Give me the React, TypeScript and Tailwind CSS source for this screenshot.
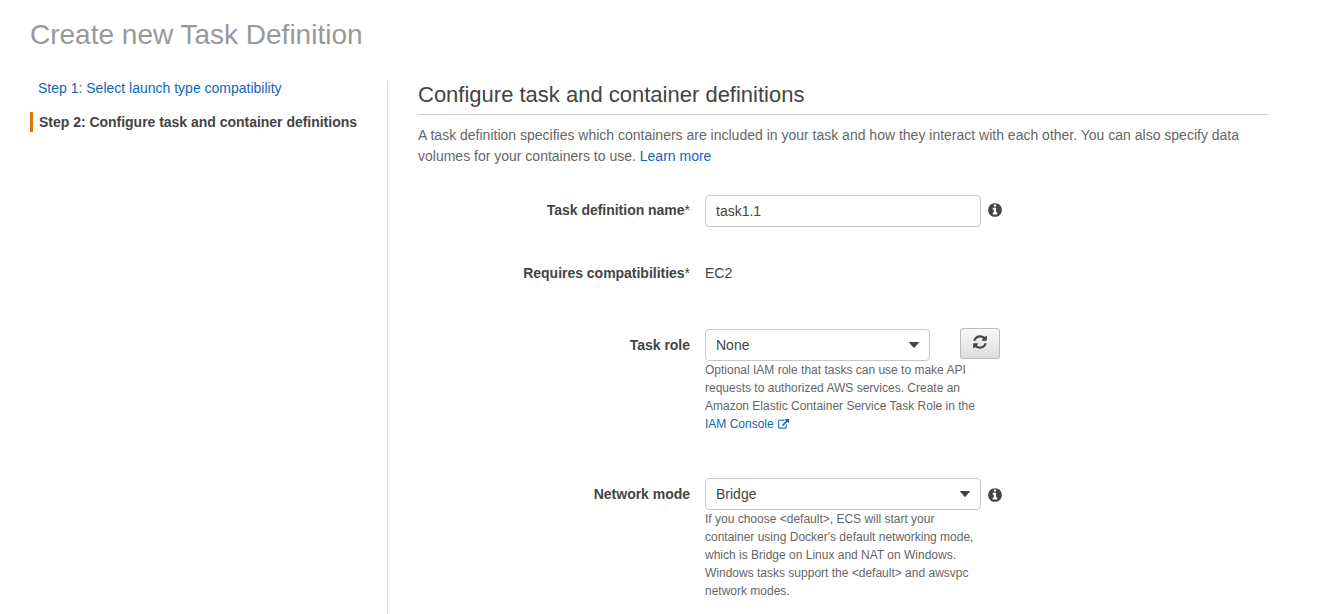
import type { ReactNode } from "react";

type IconProps = { path: string; className?: string };

function Icon({ path, className = "" }: IconProps) {
  return (
    <svg viewBox="0 0 1792 1792" fill="currentColor" className={className} aria-hidden="true">
      <path d={path} />
    </svg>
  );
}

const INFO =
  "M1152 1376v-160q0-14-9-23t-23-9h-96v-512q0-14-9-23t-23-9h-320q-14 0-23 9t-9 23v160q0 14 9 23t23 9h96v320h-96q-14 0-23 9t-9 23v160q0 14 9 23t23 9h448q14 0 23-9t9-23zm-128-896v-160q0-14-9-23t-23-9h-192q-14 0-23 9t-9 23v160q0 14 9 23t23 9h192q14 0 23-9t9-23zm640 416q0 209-103 385.5t-279.5 279.5-385.5 103-385.5-103-279.5-279.5-103-385.5 103-385.5 279.5-279.5 385.5-103 385.5 103 279.5 279.5 103 385.5z";
const REFRESH =
  "M1639 1056q0 5-1 7-64 268-268 434.5t-478 166.5q-146 0-282.5-55t-243.5-157l-129 129q-19 19-45 19t-45-19-19-45v-448q0-26 19-45t45-19h448q26 0 45 19t19 45-19 45l-137 137q71 66 161 102t187 36q134 0 250-65t186-179q11-17 53-117 8-23 30-23h192q13 0 22.5 9.5t9.5 22.5zm25-800v448q0 26-19 45t-45 19h-448q-26 0-45-19t-19-45 19-45l138-138q-148-137-349-137-134 0-250 65t-186 179q-11 17-53 117-8 23-30 23h-199q-13 0-22.5-9.5t-9.5-22.5v-7q65-268 270-434.5t480-166.5q146 0 284 55.5t245 156.5l130-129q19-19 45-19t45 19 19 45z";
const EXTERNAL =
  "M1408 928v320q0 119-84.5 203.5t-203.5 84.5h-832q-119 0-203.5-84.5t-84.5-203.5v-832q0-119 84.5-203.5t203.5-84.5h704q14 0 23 9t9 23v64q0 14-9 23t-23 9h-704q-66 0-113 47t-47 113v832q0 66 47 113t113 47h832q66 0 113-47t47-113v-320q0-14 9-23t23-9h64q14 0 23 9t9 23zm384-864v512q0 26-19 45t-45 19-45-19l-176-176-652 652q-10 10-23 10t-23-10l-114-114q-10-10-10-23t10-23l652-652-176-176q-19-19-19-45t19-45 45-19h512q26 0 45 19t19 45z";

function Row({ label, required, children, className = "" }: {
  label: string;
  required?: boolean;
  children: ReactNode;
  className?: string;
}) {
  return (
    <div className={`flex items-start gap-[15px] ${className}`}>
      <div className="w-[272px] shrink-0 pt-[5px] text-right text-sm leading-5 font-bold tracking-[-0.02px]">
        {label}
        {required && <span className="font-normal">*</span>}
      </div>
      <div>{children}</div>
    </div>
  );
}

function Select({ value, className }: { value: string; className: string }) {
  return (
    <button
      type="button"
      className={`flex h-8 items-center justify-between rounded-[4px] border border-[#c8c8c8] bg-white pr-[10px] pl-[10px] text-sm ${className}`}
    >
      <span>{value}</span>
      <svg viewBox="0 0 11 6" preserveAspectRatio="none" className="h-[6px] w-[10px]" fill="currentColor" aria-hidden="true">
        <path d="M.6 0h9.8q.9.2.2.9L6.2 5.6q-.7.6-1.4 0L.4.9Q-.3.2.6 0z" />
      </svg>
    </button>
  );
}

export default function App() {
  return (
    <div className="h-[614px] overflow-hidden bg-white px-[30px] pt-[19px] font-['Liberation_Sans',Arial,sans-serif] text-sm text-[#444]">
      <h1 className="text-[28px] leading-8 text-[#999]">Create new Task Definition</h1>
      <div className="mt-[30px] flex">
        <nav className="w-[357px] shrink-0 leading-5">
          <a className="mt-[-3px] block pl-2 text-[#1166bb]">Step 1: Select launch type compatibility</a>
          <div className="mt-[14px] border-l-[3px] border-[#dd7700] pl-[6px] font-bold tracking-[-0.02px]">
            Step 2: Configure task and container definitions
          </div>
        </nav>
        <main className="h-[533px] w-[881px] border-l border-[#ddd] pl-[30px]">
          <h2 className="h-[34px] border-b border-[#ccc] text-[22px] leading-[28px]">
            Configure task and container definitions
          </h2>
          <p className="mt-[10px] leading-[21px] text-[#666]">
            A task definition specifies which containers are included in your task and how they interact with each other. You can also specify data volumes for your containers to use.{" "}
            <a className="text-[#1166bb]">Learn more</a>
          </p>

          <Row label="Task definition name" required className="mt-[28px] h-8">
            <div className="flex items-start">
              <input
                defaultValue="task1.1"
                className="h-8 w-[276px] rounded-[4px] border border-[#c8c8c8] bg-white px-[10px] text-sm"
              />
              <Icon path={INFO} className="mt-[7px] ml-[6px] size-4" />
            </div>
          </Row>

          <Row label="Requires compatibilities" required className="mt-[31px] h-[30px]">
            <div className="pt-[5px] leading-5">EC2</div>
          </Row>

          <Row label="Task role" className="mt-[42px]">
            <div className="flex items-start gap-[30px]">
              <Select value="None" className="mt-[-1px] w-[225px]" />
              <button
                type="button"
                aria-label="Refresh"
                className="mt-[-2px] mb-[-2px] flex h-[31px] w-10 items-center justify-center rounded-[3px] border border-[#bbb] bg-linear-to-b from-[#f8f8f8] to-[#dedede] pb-[3px]"
              >
                <Icon path={REFRESH} className="size-4" />
              </button>
            </div>
            <p className="w-[276px] text-xs leading-[18px] text-[#666]">
              Optional IAM role that tasks can use to make API requests to authorized AWS services. Create an Amazon Elastic Container Service Task Role in the{" "}
              <a className="text-[#1166bb]">
                IAM Console <Icon path={EXTERNAL} className="ml-px inline size-[11px] stroke-current stroke-[50] align-[-2px]" />
              </a>
            </p>
          </Row>

          <Row label="Network mode" className="mt-[46px]">
            <div className="flex items-start">
              <Select value="Bridge" className="mt-[-1px] w-[276px]" />
              <Icon path={INFO} className="mt-[8px] ml-[6px] size-4" />
            </div>
            <p className="w-[276px] text-xs leading-[18px] text-[#666]">
              If you choose &lt;default&gt;, ECS will start your container using Docker's default networking mode, which is Bridge on Linux and NAT on Windows. Windows tasks support the &lt;default&gt; and awsvpc network modes.
            </p>
          </Row>
        </main>
      </div>
    </div>
  );
}
